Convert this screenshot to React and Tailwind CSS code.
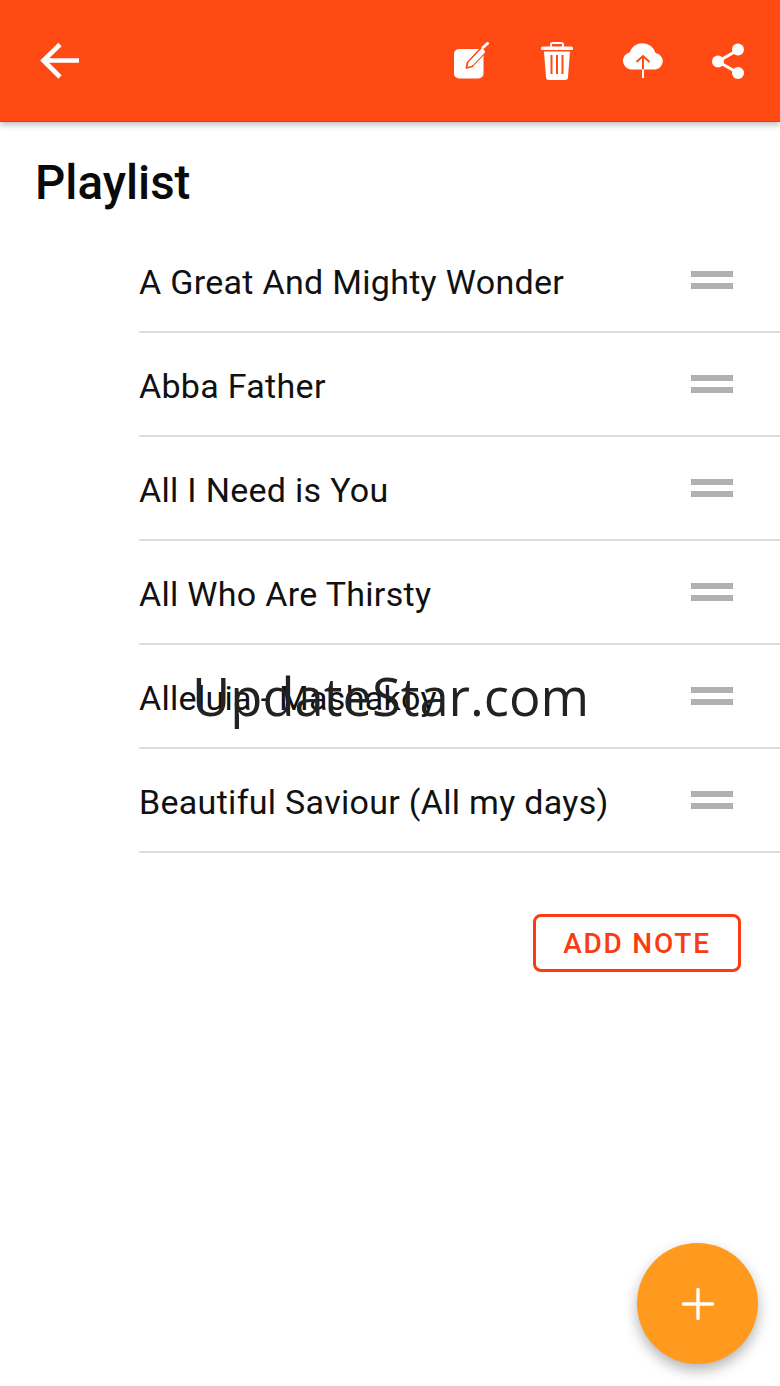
import React from "react";
import { Plus } from "lucide-react";

const songs = [
  "A Great And Mighty Wonder",
  "Abba Father",
  "All I Need is You",
  "All Who Are Thirsty",
  "Alleluia - Mashakoy",
  "Beautiful Saviour (All my days)",
];

const BackIcon = () => (
  <svg width="40" height="38" viewBox="0 0 40 38">
    <path d="M2 18.5 H39 M20 2.5 L3.5 18.5 L20 35" fill="none" stroke="#fff" strokeWidth="4.6" strokeLinejoin="miter" />
  </svg>
);

const NoteIcon = () => (
  <svg width="36" height="38" viewBox="0 0 36 38">
    <rect x="1" y="7" width="29.5" height="29.5" rx="5" fill="#fff" />
    <path d="M13.5 26 L14.5 20.5 L29 5 L33.5 9 L19 24.5 Z" fill="#fff" stroke="#ff4a14" strokeWidth="1.8" strokeLinejoin="round" />
    <path d="M30 5.5 L34.5 1.5" stroke="#fff" strokeWidth="3" strokeLinecap="round" />
    <path d="M28.5 7 L32 10.5 L20 23 L16 23.5 L16.5 19.5 Z" fill="#fff" />
  </svg>
);

const TrashIcon = () => (
  <svg width="32" height="38" viewBox="0 0 32 38">
    <path d="M10 5 V2.5 A1.5 1.5 0 0 1 11.5 1 H20.5 A1.5 1.5 0 0 1 22 2.5 V5" fill="none" stroke="#fff" strokeWidth="2" />
    <rect x="0" y="4.5" width="32" height="3.5" rx="1.5" fill="#fff" />
    <path d="M3 9.5 H29 L27 35 A3 3 0 0 1 24 38 H8 A3 3 0 0 1 5 35 Z" fill="#fff" />
    <path d="M10.5 13 V32 M16 13 V32 M21.5 13 V32" stroke="#ff4a14" strokeWidth="2" />
  </svg>
);

const CloudIcon = () => (
  <svg width="42" height="38" viewBox="0 0 42 38">
    <path d="M9 27.5 A8.7 8.7 0 0 1 7.5 10.4 A13.7 13.7 0 0 1 33.6 11 A8.3 8.3 0 0 1 33 27.5 Z" fill="#fff" />
    <path d="M21 27.5 V14 M14.5 20 L21 14 L27.5 20" fill="none" stroke="#ff4a14" strokeWidth="2" />
    <path d="M21 27.5 V36" stroke="#fff" strokeWidth="2" />
  </svg>
);

const ShareIcon = () => (
  <svg width="34" height="38" viewBox="0 0 34 38">
    <path d="M27 8 L7 19.5 L27 31" fill="none" stroke="#fff" strokeWidth="3" />
    <circle cx="27" cy="7.5" r="6" fill="#fff" />
    <circle cx="7" cy="19.5" r="6" fill="#fff" />
    <circle cx="27" cy="31" r="6" fill="#fff" />
  </svg>
);

const App = () => {
  return (
    <div className="relative w-[780px] h-[1386px] bg-white overflow-hidden font-['Roboto',sans-serif]">
      {/* Toolbar */}
      <header className="relative z-10 flex items-center h-[122px] bg-[#ff4a14] border-b border-[#e2371a] shadow-[0_3px_6px_rgba(0,0,0,0.25)] pl-[40px] pr-[35px]">
        <BackIcon />
        <div className="ml-auto flex items-center">
          <div className="mr-[52px]"><NoteIcon /></div>
          <div className="mr-[49px]"><TrashIcon /></div>
          <div className="mr-[47px]"><CloudIcon /></div>
          <ShareIcon />
        </div>
      </header>

      {/* Title */}
      <h1 className="pl-[35px] pt-[34px] text-[47.5px] leading-[54px] font-medium text-[#0a0a0a]">Playlist</h1>

      {/* Songs */}
      <ul className="mt-[19px] pl-[139px]">
        {songs.map((song) => (
          <li key={song} className="flex items-center justify-between h-[104px] border-b-2 border-[#dcdcdc] pr-[47px]">
            <span className="pt-[4px] text-[34px] text-[#111] tracking-[0.3px]">{song}</span>
            <span className="flex flex-col gap-[6px]">
              <span className="block w-[42px] h-[6px] bg-[#b0b0b0]" />
              <span className="block w-[42px] h-[6px] bg-[#b0b0b0]" />
            </span>
          </li>
        ))}
      </ul>

      {/* Add note */}
      <div className="flex justify-end pr-[39px] mt-[61px]">
        <button className="w-[208px] h-[58px] rounded-[8px] border-[3px] border-[#f93c12] pt-[2px] text-[#f93c12] text-[28px] font-medium tracking-[1.75px]">
          ADD NOTE
        </button>
      </div>

      {/* Watermark */}
      <div className="absolute left-[192px] top-[660px] text-[52.5px] leading-[72px] text-[#222] font-['Open_Sans',sans-serif] whitespace-nowrap">
        UpdateStar.com
      </div>

      {/* FAB */}
      <button className="absolute left-[637px] top-[1243px] w-[121px] h-[121px] rounded-full bg-[#ff9a1f] flex items-center justify-center shadow-[0_6px_14px_rgba(0,0,0,0.3)]">
        <Plus className="w-[50px] h-[50px] text-white" strokeWidth={1.6} />
      </button>
    </div>
  );
};

export default App;
